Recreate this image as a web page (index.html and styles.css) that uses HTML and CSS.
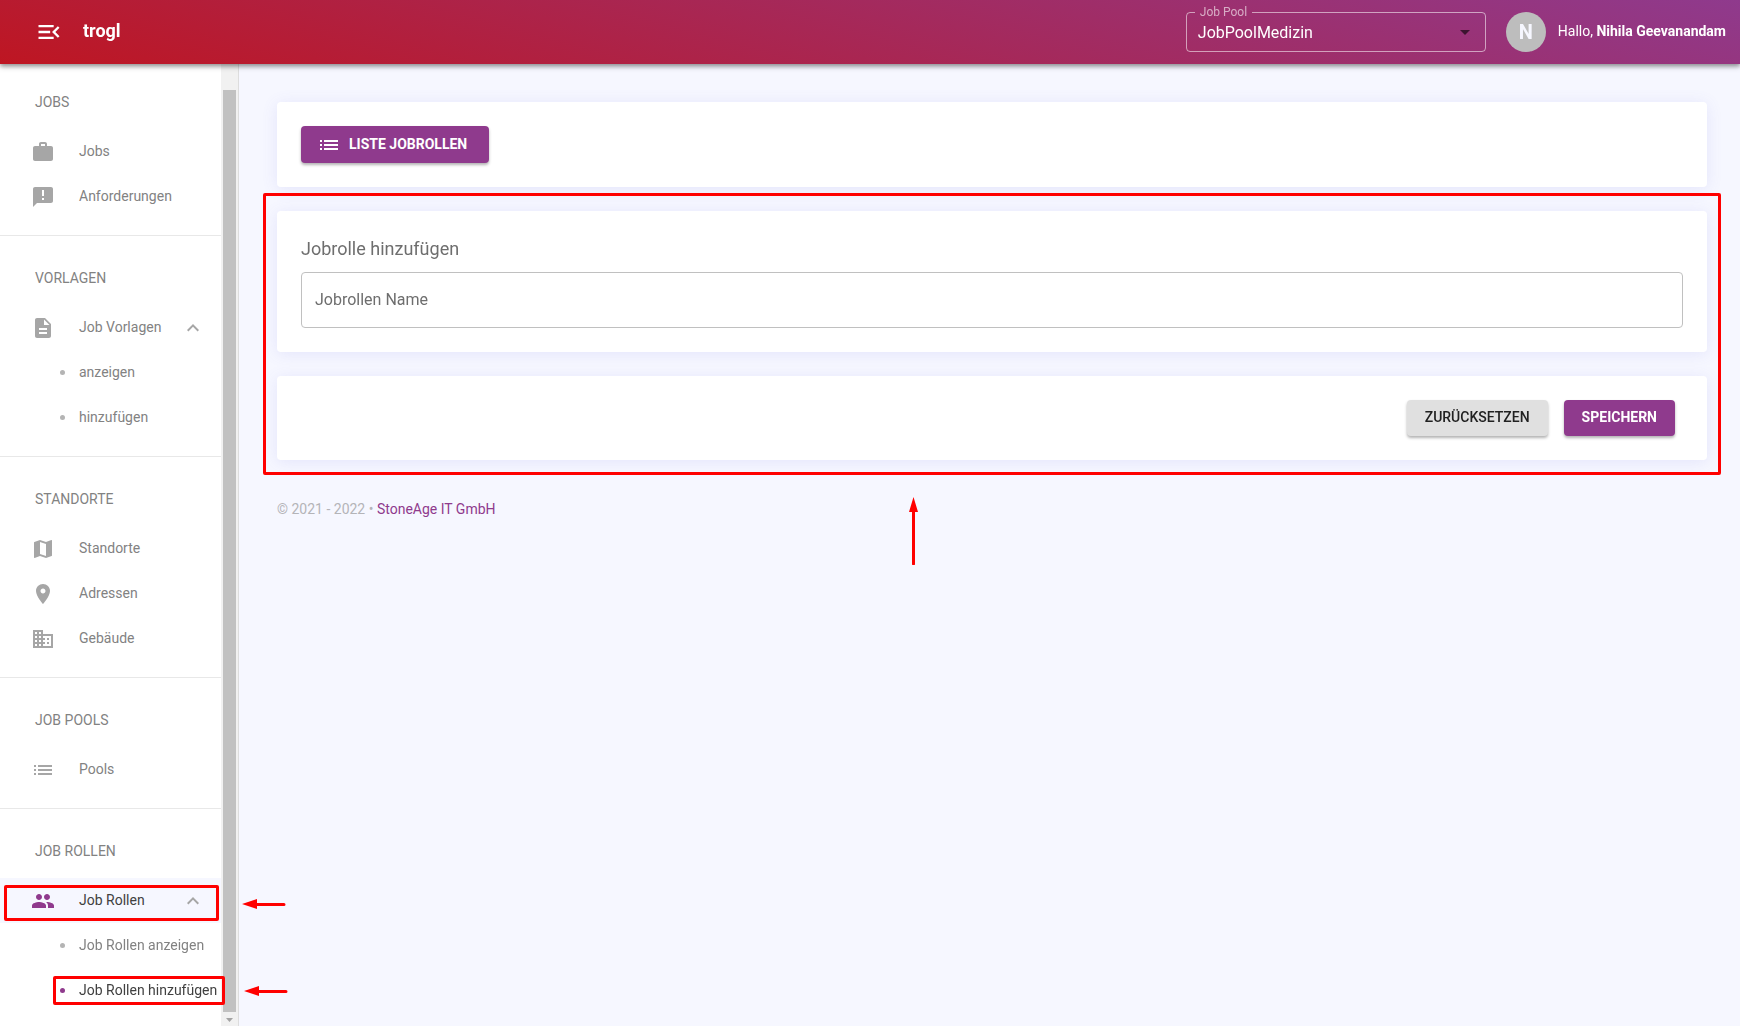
FILE: index.html
```html
<!DOCTYPE html>
<html lang="de">
<head>
<meta charset="utf-8">
<meta name="viewport" content="width=device-width, initial-scale=1">
<title>trogl – Jobrolle hinzufügen</title>
<link rel="stylesheet" href="styles.css">
</head>
<body>
<header class="topbar">
  <button class="menu-toggle" type="button" aria-label="Menü einklappen">
    <svg viewBox="0 0 24 24"><path d="M3 18h13v-2H3v2zM3 13h10v-2H3v2zm0-7v2h13V6H3zm18 9.59L17.42 12 21 8.41 19.59 7l-5 5 5 5L21 15.59z"/></svg>
  </button>
  <h1 class="brand">trogl</h1>
  <fieldset class="pool">
    <legend><label for="pool">Job Pool</label></legend>
    <select id="pool"><option>JobPoolMedizin</option></select>
    <svg class="pool-arrow" viewBox="0 0 24 24"><path d="M7 10l5 5 5-5z"/></svg>
  </fieldset>
  <span class="avatar">N</span>
  <p class="greeting">Hallo, <strong>Nihila Geevanandam</strong></p>
</header>

<div class="layout">
  <aside class="sidebar">
    <nav class="nav">
      <section class="group">
        <h2>JOBS</h2>
        <a class="item" href="#"><svg viewBox="0 0 24 24"><path d="M20 6h-4V4c0-1.11-.89-2-2-2h-4c-1.11 0-2 .89-2 2v2H4c-1.11 0-1.99.89-1.99 2L2 19c0 1.11.89 2 2 2h16c1.11 0 2-.89 2-2V8c0-1.11-.89-2-2-2zm-6 0h-4V4h4v2z"/></svg><span>Jobs</span></a>
        <a class="item" href="#"><svg viewBox="0 0 24 24"><path d="M20 2H4c-1.1 0-1.99.9-1.99 2L2 22l4-4h14c1.1 0 2-.9 2-2V4c0-1.1-.9-2-2-2zm-7 13h-2v-2h2v2zm0-4h-2V5h2v6z"/></svg><span>Anforderungen</span></a>
      </section>
      <section class="group">
        <h2>VORLAGEN</h2>
        <a class="item" href="#"><svg viewBox="0 0 24 24"><path d="M14 2H6c-1.1 0-1.99.9-1.99 2L4 20c0 1.1.89 2 1.99 2H18c1.1 0 2-.9 2-2V8l-6-6zm2 16H8v-2h8v2zm0-4H8v-2h8v2zm-3-5V3.500L18.500 9H13z"/></svg><span>Job Vorlagen</span><svg class="chevron" viewBox="0 0 24 24"><path d="M12 8l-6 6 1.41 1.41L12 10.83l4.59 4.58L18 14z"/></svg></a>
        <a class="item sub" href="#"><i class="dot"></i><span>anzeigen</span></a>
        <a class="item sub" href="#"><i class="dot"></i><span>hinzufügen</span></a>
      </section>
      <section class="group">
        <h2>STANDORTE</h2>
        <a class="item" href="#"><svg viewBox="0 0 24 24"><path d="M20.5 3l-.16.03L15 5.1 9 3 3.36 4.9c-.21.07-.36.25-.36.48V20.5c0 .28.22.5.5.5l.16-.03L9 18.9l6 2.1 5.64-1.9c.21-.07.36-.25.36-.48V3.500c0-.28-.22-.5-.5-.5zM15 19l-6-2.11V5l6 2.11V19z"/></svg><span>Standorte</span></a>
        <a class="item" href="#"><svg viewBox="0 0 24 24"><path d="M12 2C8.13 2 5 5.13 5 9c0 5.25 7 13 7 13s7-7.75 7-13c0-3.87-3.13-7-7-7zm0 9.5c-1.38 0-2.5-1.12-2.5-2.5s1.12-2.5 2.5-2.5 2.5 1.12 2.5 2.5-1.12 2.5-2.5 2.5z"/></svg><span>Adressen</span></a>
        <a class="item" href="#"><svg viewBox="0 0 24 24"><path d="M12 7V3H2v18h20V7H12zM6 19H4v-2h2v2zm0-4H4v-2h2v2zm0-4H4V9h2v2zm0-4H4V5h2v2zm4 12H8v-2h2v2zm0-4H8v-2h2v2zm0-4H8V9h2v2zm0-4H8V5h2v2zm10 12h-8v-2h2v-2h-2v-2h2v-2h-2V9h8v10zm-2-8h-2v2h2v-2zm0 4h-2v2h2v-2z"/></svg><span>Gebäude</span></a>
      </section>
      <section class="group">
        <h2>JOB POOLS</h2>
        <a class="item" href="#"><svg viewBox="0 0 24 24"><path d="M3 13h2v-2H3v2zm0 4h2v-2H3v2zm0-8h2V7H3v2zm4 4h14v-2H7v2zm0 4h14v-2H7v2zM7 7v2h14V7H7z"/></svg><span>Pools</span></a>
      </section>
      <section class="group">
        <h2>JOB ROLLEN</h2>
        <a class="item open" href="#"><svg viewBox="0 0 24 24"><path d="M16 11c1.66 0 2.99-1.34 2.99-3S17.66 5 16 5c-1.66 0-3 1.34-3 3s1.34 3 3 3zm-8 0c1.66 0 2.99-1.34 2.99-3S9.66 5 8 5C6.34 5 5 6.34 5 8s1.34 3 3 3zm0 2c-2.33 0-7 1.17-7 3.5V19h14v-2.5c0-2.33-4.67-3.5-7-3.5zm8 0c-.29 0-.62.02-.97.05 1.16.84 1.97 1.97 1.97 3.45V19h6v-2.5c0-2.33-4.67-3.5-7-3.5z"/></svg><span>Job Rollen</span><svg class="chevron" viewBox="0 0 24 24"><path d="M12 8l-6 6 1.41 1.41L12 10.83l4.59 4.58L18 14z"/></svg>
          <b class="mark mark-parent"></b><svg class="arrow arrow-parent" viewBox="0 0 44 10"><path d="M0 5L15 0v10zM14 4h28a1 1 0 0 1 0 3H14z"/></svg></a>
        <a class="item sub" href="#"><i class="dot"></i><span>Job Rollen anzeigen</span></a>
        <a class="item sub current" href="#" aria-current="page"><i class="dot"></i><span>Job Rollen hinzufügen</span>
          <b class="mark mark-child"></b><svg class="arrow arrow-child" viewBox="0 0 44 10"><path d="M0 5L15 0v10zM14 4h28a1 1 0 0 1 0 3H14z"/></svg></a>
      </section>
    </nav>
    <div class="scrollbar">
      <div class="thumb"></div>
      <svg viewBox="0 0 17 14"><path d="M5 6h7l-3.500 4z"/></svg>
    </div>
  </aside>

  <main class="content">
    <div class="card">
      <button class="btn primary with-icon" type="button"><svg viewBox="0 0 24 24"><path d="M3 13h2v-2H3v2zm0 4h2v-2H3v2zm0-8h2V7H3v2zm4 4h14v-2H7v2zm0 4h14v-2H7v2zM7 7v2h14V7H7z"/></svg>LISTE JOBROLLEN</button>
    </div>
    <form class="role-form">
      <div class="card">
        <h2 class="card-title">Jobrolle hinzufügen</h2>
        <div class="field">
          <input id="role-name" type="text">
          <label for="role-name">Jobrollen Name</label>
        </div>
      </div>
      <div class="card actions">
        <button class="btn neutral" type="reset">ZURÜCKSETZEN</button>
        <button class="btn primary" type="button">SPEICHERN</button>
      </div>
      <b class="mark mark-form"></b>
      <svg class="arrow-up" viewBox="0 0 9 68"><path d="M4.500 0L9 15H0zM3 14h3v53a1 1 0 0 1-3 0z"/></svg>
    </form>
    <footer class="footer">© 2021 - 2022 • <a href="#">StoneAge IT GmbH</a></footer>
  </main>
</div>
</body>
</html>
```
FILE: styles.css
```css
* { box-sizing: border-box; }

body {
  margin: 0;
  background: #f6f7ff;
  color: #6e6e6e;
  font-family: Roboto, "Liberation Sans", sans-serif;
  font-size: 14px;
  line-height: 20px;
}

h1, h2, p { margin: 0; font-weight: 400; }
a { color: inherit; text-decoration: none; }
button, input, select { font: inherit; }
svg { display: block; flex: none; fill: currentColor; }

/* top bar */
.topbar {
  position: relative;
  z-index: 2;
  display: flex;
  align-items: center;
  height: 64px;
  padding: 0 14px 0 35px;
  background: linear-gradient(15deg, #be1622 0%, #8f3a8d 100%);
  box-shadow: 0 2px 4px rgba(0, 0, 0, .3), 0 3px 6px rgba(0, 0, 0, .2);
  color: #fff;
}
.menu-toggle {
  padding: 0;
  border: 0;
  background: none;
  color: inherit;
}
.menu-toggle svg { width: 28px; height: 28px; }
.brand {
  margin-left: 20px;
  font-size: 18px;
  font-weight: 700;
  padding-bottom: 2px;
}
.pool {
  position: relative;
  width: 300px;
  min-width: 0;
  height: 46px;
  margin: 0 20px 6px auto;
  padding: 0 0 0 8px;
  border: 1px solid rgba(255, 255, 255, .55);
  border-radius: 4px;
}
.pool legend {
  height: 12px;
  padding: 0 5px;
  color: rgba(255, 255, 255, .6);
  font-size: 12px;
  line-height: 12px;
}
.pool select {
  display: block;
  width: 100%;
  height: 30px;
  padding: 0 32px 0 3px;
  border: 0;
  appearance: none;
  background: none;
  color: #fff;
  font-size: 16px;
}
.pool-arrow {
  position: absolute;
  right: 8px;
  bottom: 7px;
  width: 24px;
  height: 24px;
  color: rgba(0, 0, 0, .6);
  pointer-events: none;
}
.avatar {
  width: 40px;
  height: 40px;
  border-radius: 50%;
  background: #bdbdbd;
  color: #f6f7ff;
  font-size: 20px;
  font-weight: 700;
  line-height: 40px;
  text-align: center;
}
.greeting { margin-left: 12px; padding-bottom: 2px; }
.greeting strong { font-weight: 700; }

/* sidebar */
.layout { display: flex; }
.sidebar {
  position: sticky;
  top: 0;
  display: flex;
  flex: none;
  width: 239px;
  height: calc(100vh - 64px);
  border-right: 1px solid #ddd;
  background: #fff;
}
.nav { flex: 1; min-width: 0; height: 100%; }
.group { padding-bottom: 16px; }
.group + .group { border-top: 1px solid #e8e8e8; }
.group h2 {
  padding: 32px 35px 17px;
  color: #828282;
  font-size: 14px;
}
.group:first-child h2 { padding-top: 28px; }
.item {
  position: relative;
  display: flex;
  align-items: center;
  height: 45px;
  padding: 0 16px 0 31px;
  color: #828282;
  white-space: nowrap;
}
.item > svg { width: 24px; height: 24px; color: #a6a6a6; }
.item span { margin-left: 24px; padding-bottom: 1px; }
.item .chevron { margin-left: auto; }
.item.sub { padding-left: 60px; padding-right: 0; }
.item.sub span { margin-left: 14px; }
.dot {
  width: 5px;
  height: 5px;
  border-radius: 50%;
  background: #b4b4b4;
}
.item.open { background: #f6f7ff; color: #404040; }
.item.open > svg:first-child { color: #8f3a8d; }
.item.current { color: #404040; }
.item.current .dot { background: #8f3a8d; }
.scrollbar {
  display: flex;
  flex-direction: column;
  width: 17px;
  padding: 26px 2px 0;
  background: #f1f1f1;
}
.thumb { flex: 1; background: #c1c1c1; }
.scrollbar svg { height: 14px; margin: 0 -2px; color: #a3a3a3; }

/* content */
.content { flex: 1; min-width: 0; padding: 38px 33px 24px 38px; }
.card {
  padding: 24px;
  border-radius: 4px;
  background: #fff;
  box-shadow: 0 2px 16px rgba(100, 100, 220, .12);
}
.role-form {
  position: relative;
  display: flex;
  flex-direction: column;
  gap: 24px;
  margin-top: 24px;
}
.card-title {
  padding: 2px 0 11px;
  font-size: 18px;
  line-height: 24px;
}
.field { position: relative; }
.field input {
  display: block;
  width: 100%;
  height: 56px;
  padding: 0 14px;
  border: 1px solid #c0c0c0;
  border-radius: 4px;
  background: none;
  font-size: 16px;
}
.field label {
  position: absolute;
  top: 18px;
  left: 14px;
  font-size: 16px;
  pointer-events: none;
}
.actions { display: flex; justify-content: flex-end; gap: 16px; padding-right: 32px; }
.btn {
  display: flex;
  align-items: center;
  gap: 8px;
  min-height: 36px;
  padding: 0 18px 2px;
  border: 0;
  border-radius: 4px;
  box-shadow: 0 2px 3px rgba(0, 0, 0, .3);
  font-weight: 500;
}
.btn.with-icon { min-height: 37px; padding: 0 22px 2px 16px; }
.btn svg { width: 24px; height: 24px; margin-bottom: -2px; }
.btn.primary { background: #8f3a8d; color: #fff; font-weight: 700; }
.btn.neutral { background: #e0e0e0; color: #212121; }
.footer { margin-top: 39px; color: #b4b4b8; }
.footer a { color: #8f3a8d; }

/* red walkthrough marks, laid over the interface */
.mark {
  position: absolute;
  border: 3px solid #f00;
  border-radius: 2px;
  pointer-events: none;
}
.mark-form { inset: -18px -14px -15px; }
.mark-parent { inset: 7px 2px 2px 4px; }
.mark-child { inset: 8px -4px 8px 53px; z-index: 1; }
.item > .arrow {
  position: absolute;
  width: 44px;
  height: 10px;
  color: #f00;
}
.item > .arrow-parent { top: 21px; left: 242px; }
.item > .arrow-child { top: 18px; left: 244px; }
.arrow-up {
  position: absolute;
  top: 286px;
  left: 632px;
  width: 9px;
  height: 68px;
  color: #f00;
}
```
